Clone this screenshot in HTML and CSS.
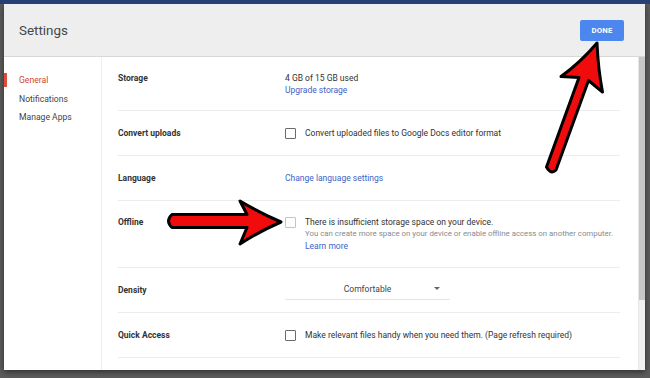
FILE: index.html
```html
<!DOCTYPE html>
<html lang="en">
    <head>
        <meta charset="UTF-8" />
        <meta name="viewport" content="width=device-width, initial-scale=1.0" />
        <title>Settings</title>
        <link rel="stylesheet" href="styles.css">
    </head>
    <body>
        <div class="page">
            <div class="dialog">
                <header class="dialog-head">
                    <h1>Settings</h1>
                    <button class="done">DONE</button>
                </header>
                <div class="dialog-body">
                    <nav class="side">
                        <a class="side-item active">General</a>
                        <a class="side-item">Notifications</a>
                        <a class="side-item">Manage Apps</a>
                    </nav>
                    <div class="content">
                        <div class="rows">
                            <div class="row row-storage">
                                <div class="label">Storage</div>
                                <div class="value">
                                    <div>4 GB of 15 GB used</div>
                                    <a class="link">Upgrade storage</a>
                                </div>
                            </div>
                            <div class="row">
                                <div class="label">Convert uploads</div>
                                <div class="value check-line">
                                    <span class="box"></span>
                                    <span>Convert uploaded files to Google Docs editor format</span>
                                </div>
                            </div>
                            <div class="row">
                                <div class="label">Language</div>
                                <div class="value"><a class="link">Change language settings</a></div>
                            </div>
                            <div class="row row-offline">
                                <div class="label">Offline</div>
                                <div class="value check-line">
                                    <span class="box disabled"></span>
                                    <div>
                                        <div>There is insufficient storage space on your device.</div>
                                        <div class="muted">You can create more space on your device or enable offline access on another computer.</div>
                                        <a class="link">Learn more</a>
                                    </div>
                                </div>
                            </div>
                            <div class="row">
                                <div class="label">Density</div>
                                <div class="value">
                                    <div class="select">
                                        <span>Comfortable</span>
                                        <i class="caret"></i>
                                    </div>
                                </div>
                            </div>
                            <div class="row">
                                <div class="label">Quick Access</div>
                                <div class="value check-line">
                                    <span class="box"></span>
                                    <span>Make relevant files handy when you need them. (Page refresh required)</span>
                                </div>
                            </div>
                        </div>
                        <div class="scrollbar"><div class="thumb"></div></div>
                    </div>
                </div>
            </div>

            <!-- red pointer arrows drawn over the screenshot -->
            <svg class="arrows" width="650" height="378" viewBox="0 0 650 378">
                <path d="M546.5 167 L579 77.5 L561 76.5 Q581 62 597 43 Q598 68 602.5 92 L588.5 80.5 L556 170 Q551 175 546.5 167 Z" />
                <path d="M172 214.5 L247 214.5 L240 201 Q260 213 281 222 Q260 231 240 244 L247 227.5 L172 227.5 Q165 221 172 214.5 Z" />
            </svg>
        </div>
    </body>
</html>
```

FILE: styles.css
```css
* {
    box-sizing: border-box;
}
body {
    margin: 0;
    font-family: Roboto, "Liberation Sans", Arial, sans-serif;
    font-size: 8.5px;
    color: #333;
}
.page {
    position: relative;
    width: 650px;
    height: 378px;
    overflow: hidden;
    background: #5c5c5c;
    border-top: 4px solid #263f74;
    padding-left: 4px;
}
.dialog {
    width: 641px;
    height: 366px;
    background: #fff;
    display: flex;
    flex-direction: column;
    box-shadow: 0 2px 6px rgba(0, 0, 0, 0.5);
}
.dialog-head {
    height: 53px;
    flex: none;
    display: flex;
    align-items: center;
    justify-content: space-between;
    padding: 0 21px 0 15px;
    background: #eeeeee;
    border-bottom: 1px solid #d8d8d8;
}
.dialog-head h1 {
    margin: 0;
    font-size: 13.4px;
    font-weight: 400;
    color: #474747;
}
.done {
    width: 44px;
    height: 21px;
    border: 0;
    border-radius: 2px;
    background: #4c86ef;
    color: #fff;
    font-family: inherit;
    font-size: 7.8px;
    font-weight: 700;
    letter-spacing: 0.2px;
    padding: 0;
}
.dialog-body {
    flex: 1;
    display: flex;
    min-height: 0;
}
.side {
    width: 98px;
    flex: none;
    border-right: 1px solid #eeeeee;
    padding-top: 16px;
    display: flex;
    flex-direction: column;
    gap: 4.5px;
}
.side-item {
    line-height: 14px;
    border-left: 3px solid transparent;
    padding-left: 12px;
    color: #444;
    font-size: 8.6px;
}
.side-item.active {
    border-left-color: #dd4b39;
    color: #d44535;
}
.content {
    flex: 1;
    display: flex;
}
.rows {
    flex: 1;
    padding: 0 18px 0 16px;
}
.row {
    display: flex;
    align-items: center;
    min-height: 45px;
    border-bottom: 1px solid #ececec;
}
.row-storage {
    align-items: flex-start;
    min-height: 54px;
    padding-top: 15px;
}
.row-offline {
    align-items: flex-start;
    min-height: 67px;
    padding-top: 15px;
}
.label {
    width: 167px;
    flex: none;
    font-weight: 700;
    color: #333;
    line-height: 12px;
}
.value {
    line-height: 12px;
}
.link {
    color: #3c63c6;
}
.muted {
    color: #8a8a8a;
    font-size: 7.85px;
    white-space: nowrap;
}
.check-line {
    display: flex;
    align-items: flex-start;
    gap: 9px;
}
.box {
    width: 11px;
    height: 11px;
    margin-top: 0.5px;
    border: 1.5px solid #6a6a6a;
    border-radius: 1px;
    flex: none;
}
.box.disabled {
    border-color: #c4c4c4;
}
.select {
    width: 165px;
    height: 20px;
    display: flex;
    align-items: center;
    padding: 0 10px 2px 16px;
    border-bottom: 1px solid #e4e4e4;
    color: #444;
}
.select span {
    flex: 1;
    text-align: center;
}
.caret {
    width: 0;
    height: 0;
    border-top: 3.5px solid #666;
    border-left: 3px solid transparent;
    border-right: 3px solid transparent;
}
.scrollbar {
    width: 7px;
    flex: none;
    background: #f1f1f1;
    border-left: 1px solid #e6e6e6;
}
.thumb {
    height: 243px;
    background: #c6c6c6;
}
.arrows {
    position: absolute;
    top: -4px;
    left: 0;
    pointer-events: none;
}
.arrows path {
    fill: #f00c0c;
    stroke: #000;
    stroke-width: 3;
    stroke-linejoin: round;
}
```
